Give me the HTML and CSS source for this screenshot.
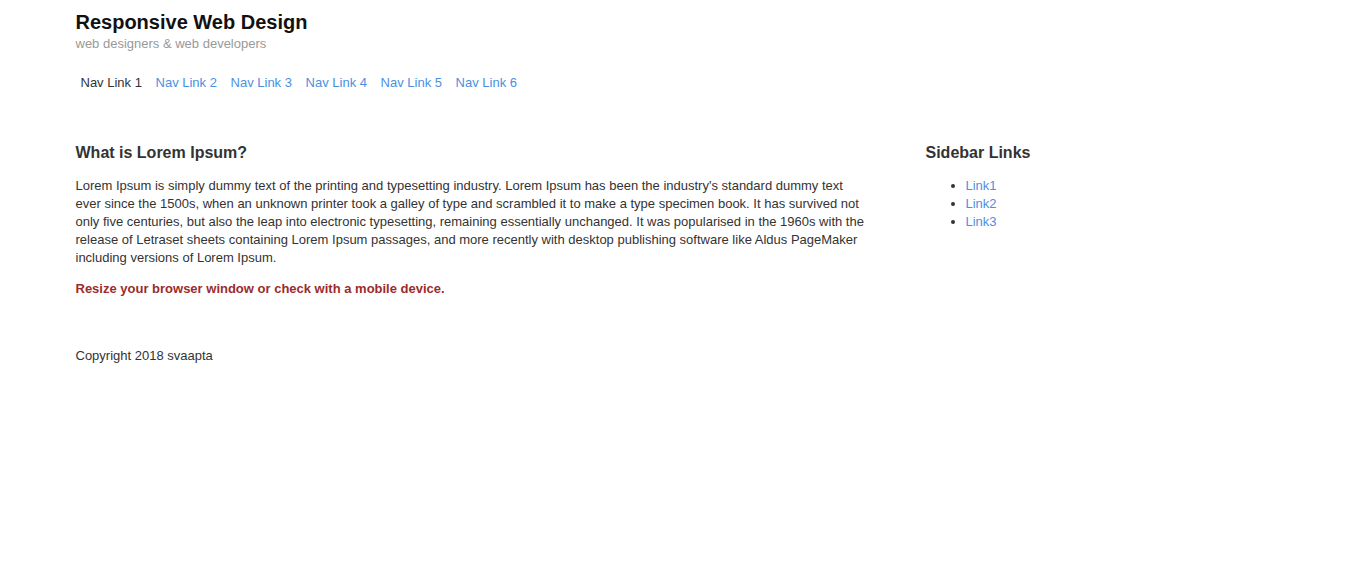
FILE: index.html
```html
<!DOCTYPE html>
<html lang="en">
<head>
<meta charset="utf-8">
<title>Responsive Web Design</title>
<link rel="stylesheet" href="styles.css">
</head>
<body>
<div class="container">
  <header class="header">
    <h1 class="site-title">Responsive Web Design</h1>
    <p class="tagline">web designers &amp; web developers</p>
  </header>
  <nav class="nav">
    <a class="nav-link active" href="#">Nav Link 1</a>
    <a class="nav-link" href="#">Nav Link 2</a>
    <a class="nav-link" href="#">Nav Link 3</a>
    <a class="nav-link" href="#">Nav Link 4</a>
    <a class="nav-link" href="#">Nav Link 5</a>
    <a class="nav-link" href="#">Nav Link 6</a>
  </nav>
  <div class="content">
    <main class="main">
      <h2 class="heading">What is Lorem Ipsum?</h2>
      <p class="text">Lorem Ipsum is simply dummy text of the printing and typesetting industry. Lorem Ipsum has been the industry's standard dummy text ever since the 1500s, when an unknown printer took a galley of type and scrambled it to make a type specimen book. It has survived not only five centuries, but also the leap into electronic typesetting, remaining essentially unchanged. It was popularised in the 1960s with the release of Letraset sheets containing Lorem Ipsum passages, and more recently with desktop publishing software like Aldus PageMaker including versions of Lorem Ipsum.</p>
      <p class="notice">Resize your browser window or check with a mobile device.</p>
    </main>
    <aside class="sidebar">
      <h2 class="heading">Sidebar Links</h2>
      <ul class="links">
        <li><a href="#">Link1</a></li>
        <li><a href="#">Link2</a></li>
        <li><a href="#">Link3</a></li>
      </ul>
    </aside>
  </div>
  <footer class="footer">Copyright 2018 svaapta</footer>
</div>
</body>
</html>
```
FILE: styles.css
```css
* { box-sizing: border-box; }
html, body { margin: 0; padding: 0; background: #fff; }
body {
  font-family: "Liberation Sans", Arial, sans-serif;
  font-size: 13px;
  line-height: 18px;
  color: #333;
}
a { color: #4a90e2; text-decoration: none; }
.container {
  width: 1200px;
  margin: 0 auto;
}
.header { padding-top: 10px; }
.site-title {
  margin: 0;
  font-size: 20px;
  line-height: 24px;
  font-weight: bold;
  color: #111;
}
.tagline {
  margin: 1px 0 0;
  color: #999;
  font-size: 13px;
  line-height: 18px;
}
.nav {
  display: flex;
  gap: 3.6px;
  margin-top: 21px;
}
.nav-link { padding: 0 5px; line-height: 18px; }
.nav-link.active { color: #333; }
.content {
  display: flex;
  margin-top: 52px;
}
.main { width: 800px; padding-right: 8px; }
.sidebar { margin-left: 50px; flex: 1; }
.heading {
  margin: 0;
  font-size: 16px;
  line-height: 18px;
  font-weight: bold;
  color: #333;
}
.text { margin: 15px 0 0; }
.notice {
  margin: 13px 0 0;
  color: #9b2c2c;
  font-weight: bold;
}
.links {
  margin: 15px 0 0;
  padding-left: 40px;
}
.footer { margin-top: 49px; }
```
